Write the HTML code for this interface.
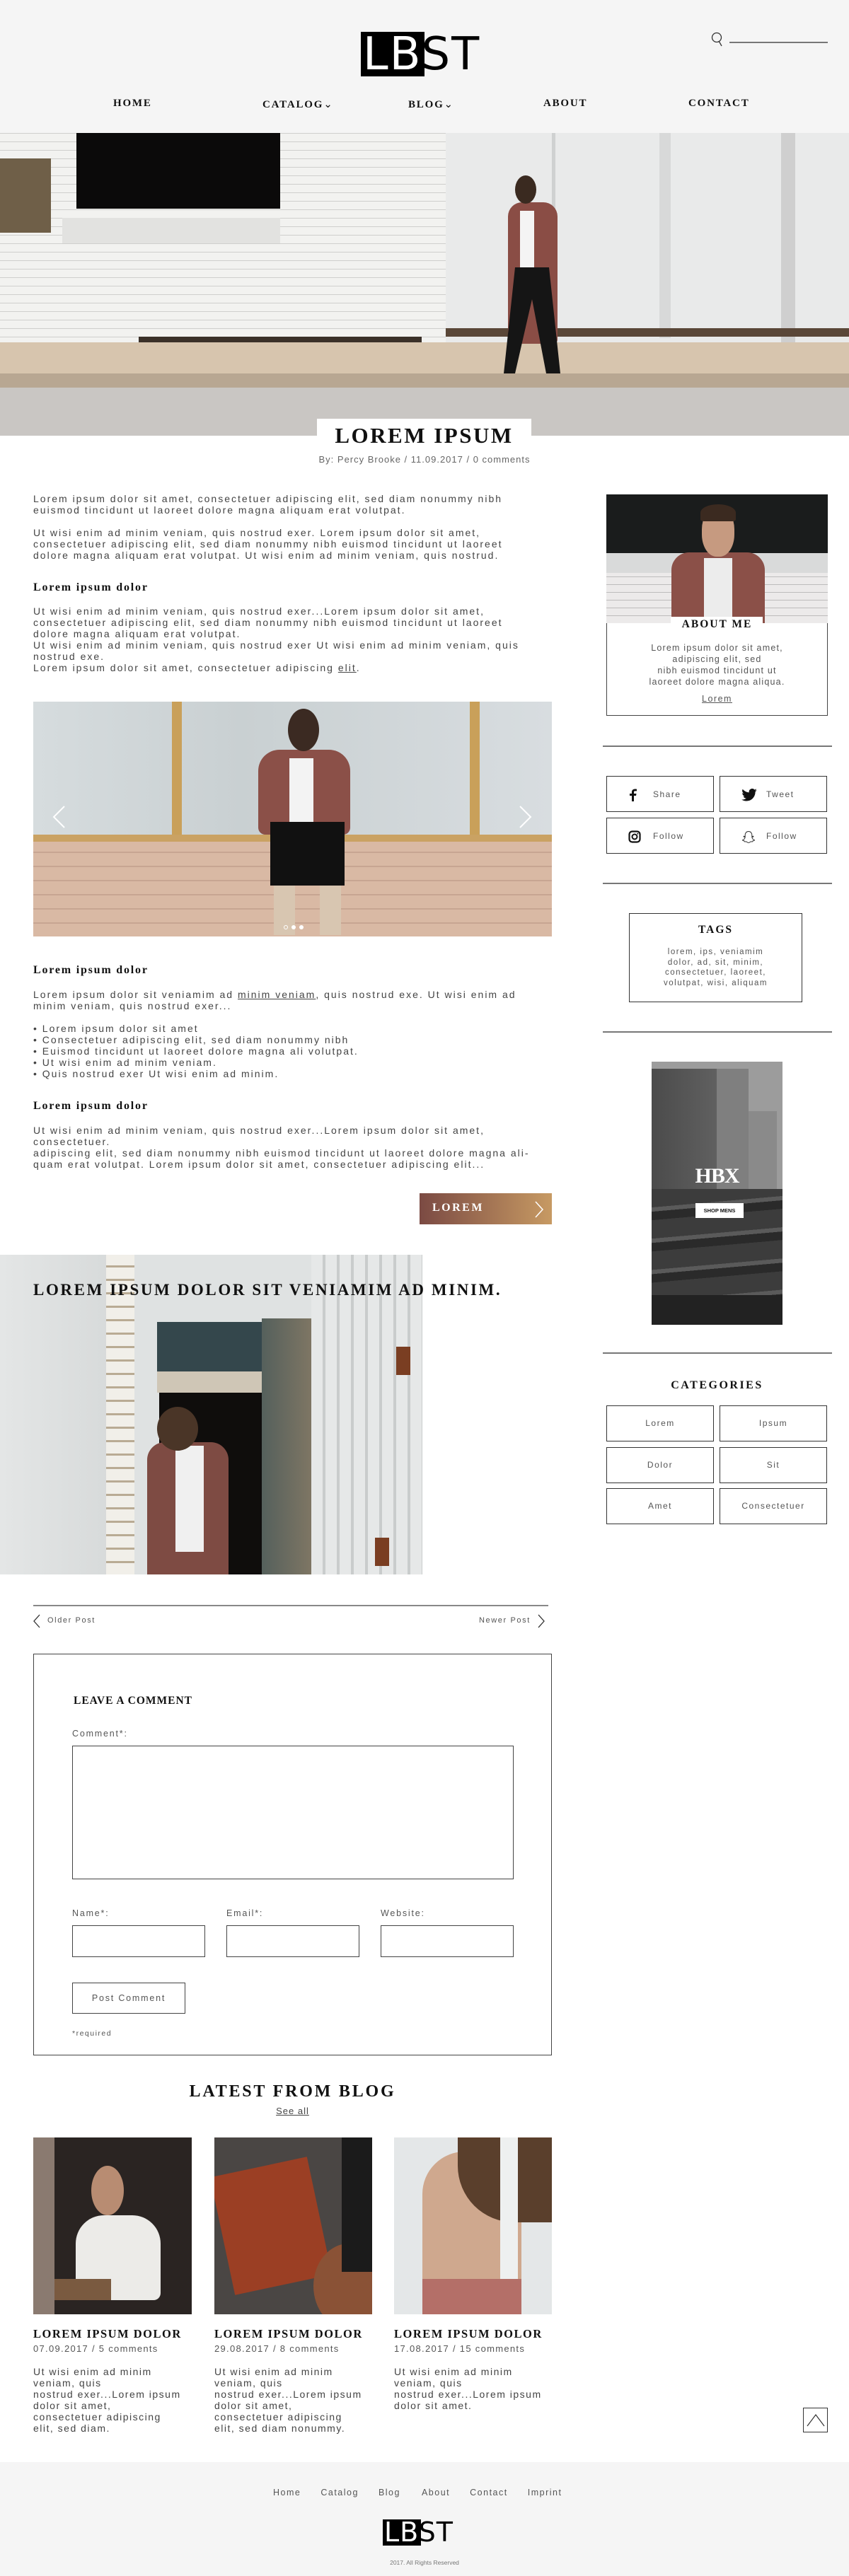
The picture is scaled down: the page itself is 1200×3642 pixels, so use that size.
<!DOCTYPE html>
<html><head><meta charset="utf-8">
<style>
*{margin:0;padding:0;box-sizing:border-box}
body{width:1200px;height:3642px;position:relative;background:#fff;font-family:"Liberation Sans",sans-serif;color:#444;overflow:hidden}
.a{position:absolute}
.slab{font-family:"Liberation Serif",serif;font-weight:bold;color:#111}
.p{font-size:14px;letter-spacing:2px;line-height:16px;color:#444;white-space:nowrap}
.h{font-size:16px;letter-spacing:1.8px}
.box{border:1.5px solid #333}
.hr{height:2px;background:#777}
.soc{border:1.5px solid #333;width:152px;height:51px;font-size:12px;letter-spacing:1.5px;color:#555}
.soc svg{position:absolute;left:30px;top:17px}
.soc span{position:absolute;left:65px;top:18px}
.cat{border:1.5px solid #333;width:152px;height:51px;font-size:12px;letter-spacing:1.5px;color:#555;text-align:center;line-height:49px}
.inp{border:1.2px solid #444;height:45px}
.lbl{font-size:12.5px;letter-spacing:1.8px;color:#555}
</style></head><body>

<!-- header -->
<div class="a" style="left:0;top:0;width:1200px;height:188px;background:#f5f5f5"></div>
<div class="a" style="left:510px;top:45px;width:90px;height:63px;background:#000"></div>
<div class="a" style="left:513px;top:42px;font:64px/70px 'DejaVu Sans','Liberation Sans',sans-serif;letter-spacing:2px;color:#000;white-space:nowrap"><span style="color:#fff">LB</span>ST</div>
<svg class="a" style="left:1004px;top:44px" width="20" height="24" viewBox="0 0 20 24"><circle cx="9" cy="9" r="6.5" fill="none" stroke="#333" stroke-width="1.3"/><path d="M12 14 L16 21" stroke="#333" stroke-width="1.3"/></svg>
<div class="a" style="left:1031px;top:59px;width:139px;height:2px;background:#777"></div>
<div class="a slab" style="top:138px;left:0;width:1200px;font-size:15px;letter-spacing:1.8px">
<span class="a" style="left:160px">HOME</span>
<span class="a" style="left:371px">CATALOG<span style="font-weight:normal">&#8964;</span></span>
<span class="a" style="left:577px">BLOG<span style="font-weight:normal">&#8964;</span></span>
<span class="a" style="left:768px">ABOUT</span>
<span class="a" style="left:973px">CONTACT</span>
</div>

<!-- hero -->
<div class="a" style="left:0;top:188px;width:1200px;height:428px;overflow:hidden;background:#e8e8e6">
 <div class="a" style="left:0;top:0;width:630px;height:300px;background:repeating-linear-gradient(0deg,#f2f2f0 0 11px,#cfcfcd 11px 12px)"></div>
 <div class="a" style="left:108px;top:0;width:288px;height:107px;background:#0b0a0a"></div>
 <div class="a" style="left:0;top:36px;width:72px;height:105px;background:#6f5f48"></div>
 <div class="a" style="left:88px;top:120px;width:308px;height:36px;background:#e2e2e0"></div>
 <div class="a" style="left:630px;top:0;width:570px;height:300px;background:#e9eaea"></div>
 <div class="a" style="left:780px;top:0;width:5px;height:290px;background:#cfd1d1"></div>
 <div class="a" style="left:932px;top:0;width:16px;height:290px;background:#d8d9d9"></div>
 <div class="a" style="left:1104px;top:0;width:20px;height:340px;background:#cfcfcf"></div>
 <div class="a" style="left:630px;top:276px;width:570px;height:12px;background:#5a4738"></div>
 <div class="a" style="left:196px;top:288px;width:400px;height:16px;background:#3a3028"></div>
 <div class="a" style="left:0;top:296px;width:1200px;height:60px;background:#d7c5ae"></div>
 <div class="a" style="left:0;top:340px;width:1200px;height:20px;background:#b8a792"></div>
 <div class="a" style="left:0;top:360px;width:1200px;height:68px;background:#c9c6c3"></div>
 <div class="a" style="left:718px;top:98px;width:70px;height:200px;background:#8a4d45;border-radius:20px 20px 6px 6px"></div>
 <div class="a" style="left:735px;top:110px;width:20px;height:100px;background:#f4f4f4"></div>
 <div class="a" style="left:728px;top:60px;width:30px;height:40px;background:#3a2a20;border-radius:50%"></div>
 <div class="a" style="left:712px;top:190px;width:80px;height:150px;background:#151515;clip-path:polygon(20% 0,80% 0,100% 100%,75% 100%,50% 30%,20% 100%,0 100%)"></div>
</div>
<div class="a" style="left:448px;top:592px;width:303px;height:40px;background:#fff"></div>
<div class="a slab" style="left:448px;top:598px;width:303px;text-align:center;font-size:31px;letter-spacing:2.5px">LOREM IPSUM</div>
<div class="a" style="left:0;top:642px;width:1200px;text-align:center;font-size:13px;letter-spacing:1px;color:#666">By: Percy Brooke / 11.09.2017 / 0 comments</div>

<!-- content -->
<div class="a p" style="left:47px;top:697px">Lorem ipsum dolor sit amet, consectetuer adipiscing elit, sed diam nonummy nibh<br>euismod tincidunt ut laoreet dolore magna aliquam erat volutpat.</div>
<div class="a p" style="left:47px;top:745px">Ut wisi enim ad minim veniam, quis nostrud exer. Lorem ipsum dolor sit amet,<br>consectetuer adipiscing elit, sed diam nonummy nibh euismod tincidunt ut laoreet<br>dolore magna aliquam erat volutpat. Ut wisi enim ad minim veniam, quis nostrud.</div>
<div class="a slab h" style="left:47px;top:822px">Lorem ipsum dolor</div>
<div class="a p" style="left:47px;top:856px">Ut wisi enim ad minim veniam, quis nostrud exer...Lorem ipsum dolor sit amet,<br>consectetuer adipiscing elit, sed diam nonummy nibh euismod tincidunt ut laoreet<br>dolore magna aliquam erat volutpat.<br>Ut wisi enim ad minim veniam, quis nostrud exer Ut wisi enim ad minim veniam, quis<br>nostrud exe.<br>Lorem ipsum dolor sit amet, consectetuer adipiscing <u>elit</u>.</div>

<!-- slider -->
<div class="a" style="left:47px;top:992px;width:733px;height:332px;overflow:hidden;background:#d2d8da">
 <div class="a" style="left:0;top:0;width:733px;height:190px;background:linear-gradient(90deg,#d6dcde,#c9d0d2 40%,#d8dde0)"></div>
 <div class="a" style="left:196px;top:0;width:14px;height:200px;background:#c9a05a"></div>
 <div class="a" style="left:617px;top:0;width:14px;height:200px;background:#c9a05a"></div>
 <div class="a" style="left:0;top:188px;width:733px;height:10px;background:#caa263"></div>
 <div class="a" style="left:0;top:198px;width:733px;height:134px;background:repeating-linear-gradient(0deg,#d9b9a4 0 18px,#c7a592 18px 20px)"></div>
 <div class="a" style="left:318px;top:68px;width:130px;height:120px;background:#8b5048;border-radius:30px 30px 10px 10px"></div>
 <div class="a" style="left:362px;top:80px;width:34px;height:100px;background:#f3f3f3"></div>
 <div class="a" style="left:360px;top:10px;width:44px;height:60px;background:#3b2a22;border-radius:50%"></div>
 <div class="a" style="left:335px;top:170px;width:105px;height:90px;background:#111"></div>
 <div class="a" style="left:340px;top:260px;width:30px;height:70px;background:#d8c6b1"></div>
 <div class="a" style="left:405px;top:260px;width:30px;height:70px;background:#d8c6b1"></div>
 <svg class="a" style="left:26px;top:146px" width="20" height="34"><path d="M18 2 L3 17 L18 32" fill="none" stroke="#fff" stroke-width="2"/></svg>
 <svg class="a" style="left:686px;top:146px" width="20" height="34"><path d="M2 2 L17 17 L2 32" fill="none" stroke="#fff" stroke-width="2"/></svg>
 <div class="a" style="left:354px;top:316px;width:6px;height:6px;border:1px solid #fff;border-radius:50%"></div>
 <div class="a" style="left:365px;top:316px;width:6px;height:6px;background:#fff;border-radius:50%"></div>
 <div class="a" style="left:376px;top:316px;width:6px;height:6px;background:#fff;border-radius:50%"></div>
</div>

<div class="a slab h" style="left:47px;top:1363px">Lorem ipsum dolor</div>
<div class="a p" style="left:47px;top:1398px">Lorem ipsum dolor sit veniamim ad <u>minim veniam</u>, quis nostrud exe. Ut wisi enim ad<br>minim veniam, quis nostrud exer...</div>
<div class="a p" style="left:47px;top:1446px">• Lorem ipsum dolor sit amet<br>• Consectetuer adipiscing elit, sed diam nonummy nibh<br>• Euismod tincidunt ut laoreet dolore magna ali volutpat.<br>• Ut wisi enim ad minim veniam.<br>• Quis nostrud exer Ut wisi enim ad minim.</div>
<div class="a slab h" style="left:47px;top:1555px">Lorem ipsum dolor</div>
<div class="a p" style="left:47px;top:1590px">Ut wisi enim ad minim veniam, quis nostrud exer...Lorem ipsum dolor sit amet,<br>consectetuer.<br>adipiscing elit, sed diam nonummy nibh euismod tincidunt ut laoreet dolore magna ali-<br>quam erat volutpat. Lorem ipsum dolor sit amet, consectetuer adipiscing elit...</div>
<div class="a" style="left:593px;top:1687px;width:187px;height:44px;background:linear-gradient(90deg,#7b4a43,#c79a63)"></div>
<div class="a slab" style="left:611px;top:1699px;color:#fff;font-size:16px;letter-spacing:2.5px">LOREM</div>
<svg class="a" style="left:755px;top:1698px" width="14" height="24"><path d="M2 1 L12 12 L2 23" fill="none" stroke="#fff" stroke-width="1.5"/></svg>

<!-- image 2 -->
<div class="a" style="left:0;top:1774px;width:597px;height:452px;overflow:hidden;background:#dfe2e2">
 <div class="a" style="left:0;top:0;width:170px;height:452px;background:linear-gradient(90deg,#e4e6e6,#d6d9d9)"></div>
 <div class="a" style="left:150px;top:0;width:40px;height:452px;background:repeating-linear-gradient(0deg,#f1efe9 0 16px,#b9ab94 16px 19px)"></div>
 <div class="a" style="left:222px;top:95px;width:160px;height:70px;background:#34474c"></div>
 <div class="a" style="left:222px;top:165px;width:160px;height:30px;background:#cfc6b6"></div>
 <div class="a" style="left:225px;top:195px;width:150px;height:257px;background:#0f0d0c"></div>
 <div class="a" style="left:370px;top:90px;width:90px;height:362px;background:linear-gradient(90deg,#55605c,#8a7c66)"></div>
 <div class="a" style="left:440px;top:0;width:157px;height:452px;background:repeating-linear-gradient(90deg,#e6e8e8 0 16px,#c9cccc 16px 20px)"></div>
 <div class="a" style="left:208px;top:265px;width:115px;height:190px;background:#7e4b43;border-radius:25px 25px 0 0"></div>
 <div class="a" style="left:248px;top:270px;width:40px;height:150px;background:#f0f0f0"></div>
 <div class="a" style="left:222px;top:215px;width:58px;height:62px;background:#4a3527;border-radius:50%"></div>
 <div class="a" style="left:560px;top:130px;width:20px;height:40px;background:#7a3e22"></div>
 <div class="a" style="left:530px;top:400px;width:20px;height:40px;background:#7a3e22"></div>
</div>
<div class="a slab" style="left:47px;top:1811px;font-size:23px;letter-spacing:2.6px;white-space:nowrap">LOREM IPSUM DOLOR SIT VENIAMIM AD MINIM.</div>

<!-- post nav -->
<div class="a" style="left:47px;top:2269px;width:728px;height:2px;background:#888"></div>
<svg class="a" style="left:46px;top:2282px" width="12" height="20"><path d="M10 1 L2 10 L10 19" fill="none" stroke="#333" stroke-width="1.3"/></svg>
<div class="a" style="left:67px;top:2285px;font-size:11px;letter-spacing:1.6px;color:#555">Older Post</div>
<div class="a" style="left:677px;top:2285px;font-size:11px;letter-spacing:1.6px;color:#555">Newer Post</div>
<svg class="a" style="left:759px;top:2282px" width="12" height="20"><path d="M2 1 L10 10 L2 19" fill="none" stroke="#333" stroke-width="1.3"/></svg>

<!-- comment -->
<div class="a" style="left:47px;top:2338px;width:733px;height:568px;border:1.5px solid #444"></div>
<div class="a slab" style="left:104px;top:2396px;font-size:15.5px;letter-spacing:1px">LEAVE A COMMENT</div>
<div class="a lbl" style="left:102px;top:2444px">Comment*:</div>
<div class="a inp" style="left:102px;top:2468px;width:624px;height:189px"></div>
<div class="a lbl" style="left:102px;top:2698px">Name*:</div>
<div class="a lbl" style="left:320px;top:2698px">Email*:</div>
<div class="a lbl" style="left:538px;top:2698px">Website:</div>
<div class="a inp" style="left:102px;top:2722px;width:188px"></div>
<div class="a inp" style="left:320px;top:2722px;width:188px"></div>
<div class="a inp" style="left:538px;top:2722px;width:188px"></div>
<div class="a inp" style="left:102px;top:2803px;width:160px;height:44px;font-size:12.5px;letter-spacing:1.8px;color:#555;text-align:center;line-height:42px">Post Comment</div>
<div class="a" style="left:102px;top:2869px;font-size:10.5px;letter-spacing:1.5px;color:#555">*required</div>

<!-- latest -->
<div class="a slab" style="left:47px;top:2944px;width:733px;text-align:center;font-size:24px;letter-spacing:2.8px">LATEST FROM BLOG</div>
<div class="a" style="left:47px;top:2977px;width:733px;text-align:center;font-size:13px;letter-spacing:1px;color:#444"><u>See all</u></div>

<div class="a" style="left:47px;top:3022px;width:224px;height:250px;background:#2a2422;overflow:hidden">
 <div class="a" style="left:0;top:0;width:30px;height:250px;background:#8a7a70"></div>
 <div class="a" style="left:60px;top:110px;width:120px;height:120px;background:#ecebe8;border-radius:40px 40px 10px 10px"></div>
 <div class="a" style="left:82px;top:40px;width:46px;height:70px;background:#b88c72;border-radius:50%"></div>
 <div class="a" style="left:30px;top:200px;width:80px;height:30px;background:#7a5a40"></div>
</div>
<div class="a" style="left:303px;top:3022px;width:223px;height:250px;background:#4a4644;overflow:hidden">
 <div class="a" style="left:10px;top:40px;width:140px;height:170px;background:#9b3f24;transform:rotate(-12deg)"></div>
 <div class="a" style="left:140px;top:150px;width:100px;height:120px;background:#8a5236;border-radius:50%"></div>
 <div class="a" style="left:180px;top:0;width:43px;height:190px;background:#1b1b1b"></div>
</div>
<div class="a" style="left:557px;top:3022px;width:223px;height:250px;background:#e4e7e8;overflow:hidden">
 <div class="a" style="left:40px;top:20px;width:140px;height:220px;background:#cfa88e;border-radius:60px 60px 40px 40px"></div>
 <div class="a" style="left:90px;top:0;width:133px;height:120px;background:#5a3f2c;border-radius:0 0 0 80px"></div>
 <div class="a" style="left:150px;top:0;width:25px;height:250px;background:#eef0f0"></div>
 <div class="a" style="left:40px;top:200px;width:140px;height:50px;background:#b46f68"></div>
</div>

<div class="a slab" style="left:47px;top:3290px;font-size:16.5px;letter-spacing:1.5px">LOREM IPSUM DOLOR</div>
<div class="a slab" style="left:303px;top:3290px;font-size:16.5px;letter-spacing:1.5px">LOREM IPSUM DOLOR</div>
<div class="a slab" style="left:557px;top:3290px;font-size:16.5px;letter-spacing:1.5px">LOREM IPSUM DOLOR</div>
<div class="a" style="left:47px;top:3313px;font-size:13px;letter-spacing:1.3px;color:#555">07.09.2017 / 5 comments</div>
<div class="a" style="left:303px;top:3313px;font-size:13px;letter-spacing:1.3px;color:#555">29.08.2017 / 8 comments</div>
<div class="a" style="left:557px;top:3313px;font-size:13px;letter-spacing:1.3px;color:#555">17.08.2017 / 15 comments</div>
<div class="a p" style="left:47px;top:3345px;letter-spacing:1.5px">Ut wisi enim ad minim<br>veniam, quis<br>nostrud exer...Lorem ipsum<br>dolor sit amet,<br>consectetuer adipiscing<br>elit, sed diam.</div>
<div class="a p" style="left:303px;top:3345px;letter-spacing:1.5px">Ut wisi enim ad minim<br>veniam, quis<br>nostrud exer...Lorem ipsum<br>dolor sit amet,<br>consectetuer adipiscing<br>elit, sed diam nonummy.</div>
<div class="a p" style="left:557px;top:3345px;letter-spacing:1.5px">Ut wisi enim ad minim<br>veniam, quis<br>nostrud exer...Lorem ipsum<br>dolor sit amet.</div>

<div class="a" style="left:1135px;top:3404px;width:35px;height:35px;border:1px solid #333"></div>
<svg class="a" style="left:1140px;top:3411px" width="26" height="20"><path d="M1 19 L13 3 L25 19" fill="none" stroke="#333" stroke-width="1.2"/></svg>

<!-- sidebar -->
<div class="a" style="left:857px;top:699px;width:313px;height:313px;border:1.5px solid #444"></div>
<div class="a" style="left:857px;top:699px;width:313px;height:182px;overflow:hidden;background:#1a1c1c">
 <div class="a" style="left:0;top:83px;width:313px;height:99px;background:repeating-linear-gradient(0deg,#eceaea 0 10px,#bdbcbc 10px 11px)"></div>
 <div class="a" style="left:0;top:83px;width:313px;height:28px;background:#d9dada"></div>
 <div class="a" style="left:92px;top:82px;width:132px;height:100px;background:#8b5048;border-radius:25px 25px 0 0"></div>
 <div class="a" style="left:138px;top:90px;width:40px;height:92px;background:#ececec"></div>
 <div class="a" style="left:135px;top:18px;width:46px;height:70px;background:#c69a80;border-radius:45%"></div>
 <div class="a" style="left:133px;top:14px;width:50px;height:24px;background:#3b2a20;border-radius:50% 50% 10% 10%"></div>
</div>
<div class="a" style="left:948px;top:872px;width:130px;height:22px;background:#fff"></div>
<div class="a slab" style="left:857px;top:874px;width:313px;text-align:center;font-size:15.5px;letter-spacing:2px">ABOUT ME</div>
<div class="a" style="left:857px;top:908px;width:313px;text-align:center;font-size:12.5px;letter-spacing:1.2px;line-height:16px;color:#555">Lorem ipsum dolor sit amet,<br>adipiscing elit, sed<br>nibh euismod tincidunt ut<br>laoreet dolore magna aliqua.</div>
<div class="a" style="left:857px;top:981px;width:313px;text-align:center;font-size:12.5px;letter-spacing:1.5px;color:#555"><u>Lorem</u></div>

<div class="a hr" style="left:852px;top:1054px;width:324px"></div>
<div class="a soc" style="left:857px;top:1097px"><svg width="12" height="18" viewBox="0 0 12 18"><path d="M8 18V10h3l.5-3H8V5c0-1 .3-1.6 1.6-1.6H12V.7C11.6.6 10.6.5 9.5.5 7.2.5 5 1.9 5 4.6V7H2v3h3v8z" fill="#111"/></svg><span>Share</span></div>
<div class="a soc" style="left:1017px;top:1097px"><svg width="22" height="18" viewBox="0 0 24 20"><path d="M24 2.4a10 10 0 0 1-2.8.8A5 5 0 0 0 23.3.4a10 10 0 0 1-3.1 1.2A4.9 4.9 0 0 0 11.8 6 14 14 0 0 1 1.7.9a4.9 4.9 0 0 0 1.5 6.6A4.9 4.9 0 0 1 1 6.9a4.9 4.9 0 0 0 3.9 4.8 4.9 4.9 0 0 1-2.2.1 4.9 4.9 0 0 0 4.6 3.4A9.9 9.9 0 0 1 0 17.2 14 14 0 0 0 7.5 19.4c9.1 0 14-7.5 14-14v-.6A10 10 0 0 0 24 2.4z" fill="#111"/></svg><span>Tweet</span></div>
<div class="a soc" style="left:857px;top:1156px"><svg width="18" height="18" viewBox="0 0 18 18"><rect x="1.5" y="1.5" width="15" height="15" rx="4" fill="none" stroke="#111" stroke-width="2.2"/><circle cx="9" cy="9" r="3.5" fill="none" stroke="#111" stroke-width="2"/><circle cx="13.3" cy="4.7" r="1" fill="#111"/></svg><span>Follow</span></div>
<div class="a soc" style="left:1017px;top:1156px"><svg width="20" height="20" viewBox="0 0 20 20"><path d="M10 1.5c3 0 4.8 2.3 4.8 5v2.2l1.8-.5c.5.2.4.8-.1 1l-1.7.7c.6 2 2 3.4 3.700 3.8-.2.8-1.600 1-2.500 1.200-.2.600-.1 1.100-.6 1.100-.7 0-1.600-.4-2.800.2-.9.600-1.500 1.300-2.600 1.300s-1.700-.7-2.600-1.300c-1.200-.6-2.100-.2-2.800-.2-.5 0-.4-.5-.6-1.100-.9-.2-2.300-.4-2.500-1.200 1.700-.4 3.100-1.800 3.700-3.800l-1.700-.7c-.5-.2-.6-.8-.1-1l1.800.5V6.500c0-2.700 1.800-5 4.800-5z" fill="none" stroke="#333" stroke-width="1"/></svg><span>Follow</span></div>

<div class="a hr" style="left:852px;top:1248px;width:324px"></div>
<div class="a box" style="left:889px;top:1291px;width:245px;height:126px"></div>
<div class="a slab" style="left:889px;top:1306px;width:245px;text-align:center;font-size:15.5px;letter-spacing:2px">TAGS</div>
<div class="a" style="left:889px;top:1339px;width:245px;text-align:center;font-size:11.5px;letter-spacing:1.5px;line-height:14.5px;color:#555">lorem, ips, veniamim<br>dolor, ad, sit, minim,<br>consectetuer, laoreet,<br>volutpat, wisi, aliquam</div>

<div class="a hr" style="left:852px;top:1458px;width:324px"></div>
<div class="a" style="left:921px;top:1501px;width:185px;height:372px;background:#6e6e6e;overflow:hidden">
 <div class="a" style="left:0;top:0;width:185px;height:372px;background:#9c9c9c"></div>
 <div class="a" style="left:0;top:10px;width:92px;height:362px;background:linear-gradient(90deg,#4b4b4b,#606060)"></div>
 <div class="a" style="left:92px;top:10px;width:45px;height:362px;background:#7f7f7f"></div>
 <div class="a" style="left:137px;top:70px;width:40px;height:302px;background:#8a8a8a"></div>
 <div class="a" style="left:0;top:180px;width:185px;height:192px;background:repeating-linear-gradient(175deg,#3c3c3c 0 26px,#5a5a5a 26px 32px,#2a2a2a 32px 44px)"></div>
 <div class="a" style="left:0;top:330px;width:185px;height:42px;background:#222"></div>
</div>
<div class="a" style="left:921px;top:1646px;width:185px;text-align:center;font:bold 30px 'Liberation Serif',serif;color:#fff;letter-spacing:-1px">HBX</div>
<div class="a" style="left:983px;top:1701px;width:68px;height:21px;background:#fff;font:bold 7.5px/21px 'Liberation Sans',sans-serif;text-align:center;color:#111">SHOP MENS</div>

<div class="a hr" style="left:852px;top:1912px;width:324px"></div>
<div class="a slab" style="left:857px;top:1950px;width:313px;text-align:center;font-size:16px;letter-spacing:2.5px">CATEGORIES</div>
<div class="a cat" style="left:857px;top:1987px">Lorem</div>
<div class="a cat" style="left:1017px;top:1987px">Ipsum</div>
<div class="a cat" style="left:857px;top:2046px">Dolor</div>
<div class="a cat" style="left:1017px;top:2046px">Sit</div>
<div class="a cat" style="left:857px;top:2104px">Amet</div>
<div class="a cat" style="left:1017px;top:2104px">Consectetuer</div>

<!-- footer -->
<div class="a" style="left:0;top:3481px;width:1200px;height:161px;background:#f5f5f5"></div>
<div class="a" style="left:386px;top:3517px;font-size:12.5px;letter-spacing:1.5px;color:#555;white-space:nowrap">
<span style="margin-right:28px">Home</span><span style="margin-right:28px">Catalog</span><span style="margin-right:30px">Blog</span><span style="margin-right:28px">About</span><span style="margin-right:28px">Contact</span><span>Imprint</span></div>
<div class="a" style="left:541px;top:3562px;width:54px;height:37px;background:#000"></div>
<div class="a" style="left:543px;top:3560px;font:38px/41px 'DejaVu Sans','Liberation Sans',sans-serif;letter-spacing:1px;color:#000;white-space:nowrap"><span style="color:#fff">LB</span>ST</div>
<div class="a" style="left:0;top:3618px;width:1200px;text-align:center;font-size:8.5px;color:#777">2017. All Rights Reserved</div>
</body></html>
